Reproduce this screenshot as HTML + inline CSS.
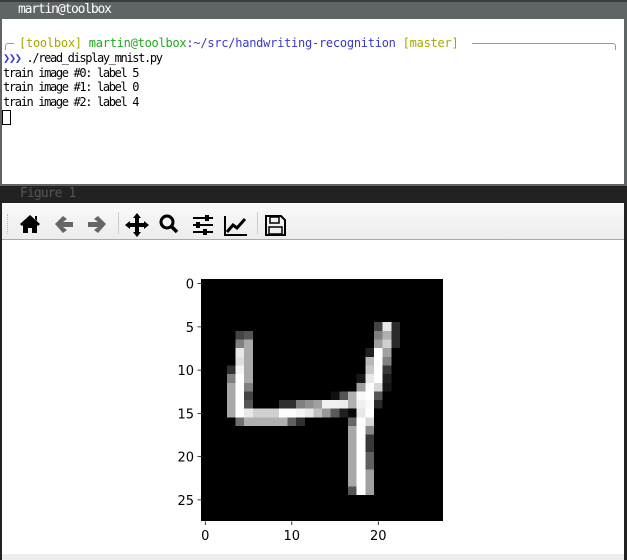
<!DOCTYPE html>
<html><head><meta charset="utf-8"><style>
*{margin:0;padding:0;box-sizing:border-box}
body{width:627px;height:560px;overflow:hidden;background:#fff;position:relative;font-family:"DejaVu Sans Mono","Liberation Mono",monospace}
.abs{position:absolute}
.t{font-size:12px;letter-spacing:-1.35px;white-space:pre;color:#000;line-height:14.6px}
</style></head><body>
<div class="abs" style="left:0;top:0;width:627px;height:186px;background:#5f6467"></div>
<div class="abs" style="left:0;top:0;width:627px;height:2px;background:#3a3d40"></div>
<div class="abs t" style="left:18px;top:3px;color:#fff;font-size:13px;letter-spacing:-1.2px">martin@toolbox</div>
<div class="abs" style="left:2px;top:19px;width:622px;height:165px;background:#fff"></div>
<div class="abs" style="left:5px;top:43px;width:9px;height:7px;border-top:1px solid #999;border-left:1px solid #999;border-top-left-radius:3px"></div>
<div class="abs" style="left:472px;top:43px;width:144px;height:7px;border-top:1px solid #999;border-right:1px solid #999;border-top-right-radius:3px"></div>
<div class="abs t" style="left:19px;top:36px;letter-spacing:-0.25px"><span style="color:#a8a800">[toolbox]</span> <span style="color:#1faa1f">martin@toolbox</span><span style="color:#3a3ac8">:~/src/handwriting-recognition</span> <span style="color:#a8a800">[master]</span></div>
<div class="abs t" style="left:3px;top:51px"><span style="color:#3a3ac8;font-weight:bold">❯❯❯</span> ./read_display_mnist.py
train image #0: label 5
train image #1: label 0
train image #2: label 4</div>
<div class="abs" style="left:2px;top:110px;width:9px;height:15px;border:1px solid #000"></div>
<div class="abs" style="left:0;top:186px;width:627px;height:374px;background:#222"></div>
<div class="abs t" style="left:20px;top:187px;color:#555;font-size:13px;letter-spacing:-0.9px">Figure 1</div>
<div class="abs" style="left:2px;top:203px;width:622px;height:357px;background:#fff"></div>
<div class="abs" style="left:2px;top:203px;width:622px;height:37px;background:linear-gradient(#fafafa,#ececec);border-bottom:1px solid #aaa"></div>
<div class="abs" style="left:7px;top:214px;width:2px;height:20px;border-left:1px dotted #bbb"></div>
<div class="abs" style="left:118px;top:212px;width:1px;height:22px;background:#ccc"></div>
<div class="abs" style="left:257px;top:212px;width:1px;height:22px;background:#ccc"></div>
<div class="abs" style="left:2px;top:554px;width:622px;height:6px;background:#eee"></div>
<svg class="abs" style="left:0;top:203px" width="300" height="37" viewBox="0 0 300 37">
 <path d="M30 12 L20 21 L22 23 L30 16 L38 23 L40 21 Z M23 22 V30 H28 V25 H32 V30 H37 V22 L30 16Z M35 13 h2 v5 l-2 -2z" fill="#000"/>
 <path d="M55 21 L63 13 L67 16 L63 19 H73 V24 H63 L67 27 L63 30 Z" fill="#666"/>
 <path d="M106 21 L98 13 L94 16 L98 19 H88 V24 H98 L94 27 L98 30 Z" fill="#666"/>
 <path d="M137 10 L141 15 H139 V20 H144 V18 L149 22 L144 26 V24 H139 V29 H141 L137 34 L133 29 H135 V24 H130 V26 L125 22 L130 18 V20 H135 V15 H133 Z" fill="#000"/>
 <circle cx="167" cy="19" r="6" fill="none" stroke="#000" stroke-width="3"/>
 <path d="M171 23 L177 29" stroke="#000" stroke-width="3.5"/>
 <g stroke="#000" stroke-width="2"><path d="M193 15 H213 M193 22 H213 M193 29 H213"/></g>
 <rect x="205" y="12" width="4" height="6" fill="#000"/><rect x="196" y="19" width="4" height="6" fill="#000"/><rect x="203" y="26" width="4" height="6" fill="#000"/>
 <path d="M225 13 V32 H247" stroke="#000" stroke-width="2" fill="none"/>
 <path d="M227 29 L233 22 L237 25 L245 16" stroke="#000" stroke-width="3" fill="none"/>
 <path d="M266 13 H281 L285 17 V32 H266 Z" fill="none" stroke="#000" stroke-width="2"/>
 <rect x="270" y="14" width="9" height="6" fill="none" stroke="#000" stroke-width="1.5"/>
 <rect x="269" y="24" width="13" height="7" fill="none" stroke="#000" stroke-width="1.5"/>
</svg>
<svg class="abs" style="left:201px;top:279.3px" width="242.2" height="242.2" viewBox="0 0 28 28" shape-rendering="crispEdges">
<rect width="28" height="28" fill="#000"/>
<g>
<rect x="20" y="5" width="1" height="1" fill="#444"/><rect x="21" y="5" width="1" height="1" fill="#e8e8e8"/><rect x="22" y="5" width="1" height="1" fill="#2a2a2a"/>
<rect x="4" y="6" width="1" height="1" fill="#444"/><rect x="5" y="6" width="1" height="1" fill="#555"/><rect x="20" y="6" width="1" height="1" fill="#808080"/><rect x="21" y="6" width="1" height="1" fill="#b0b0b0"/><rect x="22" y="6" width="1" height="1" fill="#2a2a2a"/>
<rect x="4" y="7" width="1" height="1" fill="#808080"/><rect x="5" y="7" width="1" height="1" fill="#aaa"/><rect x="20" y="7" width="1" height="1" fill="#a0a0a0"/><rect x="21" y="7" width="1" height="1" fill="#d0d0d0"/><rect x="22" y="7" width="1" height="1" fill="#2a2a2a"/>
<rect x="4" y="8" width="1" height="1" fill="#e8e8e8"/><rect x="5" y="8" width="1" height="1" fill="#aaa"/><rect x="19" y="8" width="1" height="1" fill="#202020"/><rect x="20" y="8" width="1" height="1" fill="#fff"/><rect x="21" y="8" width="1" height="1" fill="#a0a0a0"/>
<rect x="4" y="9" width="1" height="1" fill="#e0e0e0"/><rect x="5" y="9" width="1" height="1" fill="#aaa"/><rect x="19" y="9" width="1" height="1" fill="#b8b8b8"/><rect x="20" y="9" width="1" height="1" fill="#fff"/><rect x="21" y="9" width="1" height="1" fill="#808080"/>
<rect x="3" y="10" width="1" height="1" fill="#303030"/><rect x="4" y="10" width="1" height="1" fill="#f4f4f4"/><rect x="5" y="10" width="1" height="1" fill="#aaa"/><rect x="19" y="10" width="1" height="1" fill="#c8c8c8"/><rect x="20" y="10" width="1" height="1" fill="#fff"/><rect x="21" y="10" width="1" height="1" fill="#383838"/>
<rect x="3" y="11" width="1" height="1" fill="#808080"/><rect x="4" y="11" width="1" height="1" fill="#fff"/><rect x="5" y="11" width="1" height="1" fill="#aaa"/><rect x="18" y="11" width="1" height="1" fill="#181818"/><rect x="19" y="11" width="1" height="1" fill="#e8e8e8"/><rect x="20" y="11" width="1" height="1" fill="#fff"/><rect x="21" y="11" width="1" height="1" fill="#202020"/>
<rect x="3" y="12" width="1" height="1" fill="#a8a8a8"/><rect x="4" y="12" width="1" height="1" fill="#fff"/><rect x="5" y="12" width="1" height="1" fill="#808080"/><rect x="18" y="12" width="1" height="1" fill="#a0a0a0"/><rect x="19" y="12" width="1" height="1" fill="#fff"/><rect x="20" y="12" width="1" height="1" fill="#d8d8d8"/><rect x="21" y="12" width="1" height="1" fill="#181818"/>
<rect x="3" y="13" width="1" height="1" fill="#a8a8a8"/><rect x="4" y="13" width="1" height="1" fill="#fff"/><rect x="5" y="13" width="1" height="1" fill="#444"/><rect x="15" y="13" width="1" height="1" fill="#101010"/><rect x="16" y="13" width="1" height="1" fill="#555"/><rect x="17" y="13" width="1" height="1" fill="#b0b0b0"/><rect x="18" y="13" width="1" height="1" fill="#f8f8f8"/><rect x="19" y="13" width="1" height="1" fill="#fff"/><rect x="20" y="13" width="1" height="1" fill="#555"/>
<rect x="3" y="14" width="1" height="1" fill="#a8a8a8"/><rect x="4" y="14" width="1" height="1" fill="#fff"/><rect x="5" y="14" width="1" height="1" fill="#555"/><rect x="9" y="14" width="2" height="1" fill="#303030"/><rect x="11" y="14" width="1" height="1" fill="#808080"/><rect x="12" y="14" width="1" height="1" fill="#909090"/><rect x="13" y="14" width="1" height="1" fill="#a0a0a0"/><rect x="14" y="14" width="2" height="1" fill="#f0f0f0"/><rect x="16" y="14" width="1" height="1" fill="#ececec"/><rect x="17" y="14" width="1" height="1" fill="#b0b0b0"/><rect x="18" y="14" width="1" height="1" fill="#f0f0f0"/><rect x="19" y="14" width="1" height="1" fill="#fafafa"/><rect x="20" y="14" width="1" height="1" fill="#282828"/>
<rect x="3" y="15" width="1" height="1" fill="#a8a8a8"/><rect x="4" y="15" width="1" height="1" fill="#fff"/><rect x="5" y="15" width="1" height="1" fill="#e8e8e8"/><rect x="6" y="15" width="3" height="1" fill="#d0d0d0"/><rect x="9" y="15" width="2" height="1" fill="#fcfcfc"/><rect x="11" y="15" width="1" height="1" fill="#f4f4f4"/><rect x="12" y="15" width="1" height="1" fill="#e8e8e8"/><rect x="13" y="15" width="1" height="1" fill="#c0c0c0"/><rect x="14" y="15" width="1" height="1" fill="#989898"/><rect x="15" y="15" width="1" height="1" fill="#5a5a5a"/><rect x="16" y="15" width="1" height="1" fill="#202020"/><rect x="17" y="15" width="1" height="1" fill="#080808"/><rect x="18" y="15" width="1" height="1" fill="#e8e8e8"/><rect x="19" y="15" width="1" height="1" fill="#fff"/>
<rect x="4" y="16" width="1" height="1" fill="#707070"/><rect x="5" y="16" width="5" height="1" fill="#b0b0b0"/><rect x="10" y="16" width="1" height="1" fill="#606060"/><rect x="11" y="16" width="1" height="1" fill="#303030"/><rect x="17" y="16" width="1" height="1" fill="#666"/><rect x="18" y="16" width="1" height="1" fill="#fff"/><rect x="19" y="16" width="1" height="1" fill="#d8d8d8"/>
<rect x="17" y="17" width="1" height="7" fill="#a8a8a8"/><rect x="18" y="17" width="1" height="8" fill="#fff"/>
<rect x="19" y="17" width="1" height="1" fill="#888"/><rect x="19" y="18" width="1" height="2" fill="#383838"/><rect x="19" y="20" width="1" height="2" fill="#606060"/><rect x="19" y="22" width="1" height="3" fill="#a0a0a0"/>
<rect x="17" y="24" width="1" height="1" fill="#555"/>
</g>
</svg>
<svg class="abs" style="left:150px;top:270px" width="310" height="284" viewBox="150 270 310 284" font-family="DejaVu Sans, Liberation Sans, sans-serif" font-size="13">
<g stroke="#000" stroke-width="0.8">
<path d="M197.5 283.6 H201 M197.5 326.9 H201 M197.5 370.1 H201 M197.5 413.4 H201 M197.5 456.6 H201 M197.5 499.9 H201"/>
<path d="M205.3 521.5 V525 M291.8 521.5 V525 M378.3 521.5 V525"/>
</g>
<g text-anchor="end" fill="#000">
<text x="194" y="288.5">0</text><text x="194" y="331.8">5</text><text x="194" y="375">10</text><text x="194" y="418.3">15</text><text x="194" y="461.5">20</text><text x="194" y="504.8">25</text>
</g>
<g text-anchor="middle" fill="#000">
<text x="205.3" y="540">0</text><text x="291.8" y="540">10</text><text x="378.3" y="540">20</text>
</g>
</svg>
</body></html>
